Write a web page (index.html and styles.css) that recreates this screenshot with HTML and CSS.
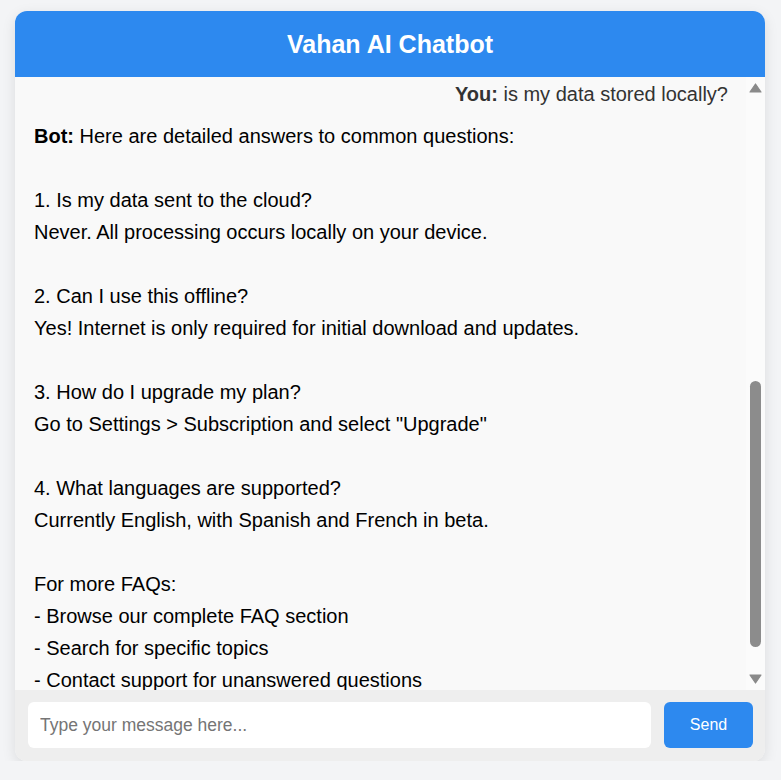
FILE: index.html
```html
<!DOCTYPE html>
<html lang="en">
<head>
<meta charset="utf-8">
<title>Vahan AI Chatbot</title>
<link rel="stylesheet" href="styles.css">
</head>
<body>
<div class="chat-container">
  <div class="chat-header">Vahan AI Chatbot</div>
  <div class="chat-body">
    <div class="chat-box">
      <div class="message user"><strong>You:</strong> is my data stored locally?</div>
      <div class="message bot"><strong>Bot:</strong> Here are detailed answers to common questions:

1. Is my data sent to the cloud?
Never. All processing occurs locally on your device.

2. Can I use this offline?
Yes! Internet is only required for initial download and updates.

3. How do I upgrade my plan?
Go to Settings &gt; Subscription and select "Upgrade"

4. What languages are supported?
Currently English, with Spanish and French in beta.

For more FAQs:
- Browse our complete FAQ section
- Search for specific topics
- Contact support for unanswered questions</div>
    </div>
    <div class="scrollbar" aria-hidden="true">
      <svg class="scroll-arrow up" width="13" height="10" viewBox="0 0 13 10"><polygon points="6.5,1 12,9 1,9" fill="#8a8a8a" stroke="#8a8a8a" stroke-width="1.2" stroke-linejoin="round"/></svg>
      <div class="scroll-thumb"></div>
      <svg class="scroll-arrow down" width="13" height="10" viewBox="0 0 13 10"><polygon points="1,1 12,1 6.5,9" fill="#8a8a8a" stroke="#8a8a8a" stroke-width="1.2" stroke-linejoin="round"/></svg>
    </div>
  </div>
  <div class="input-area">
    <input class="message-input" type="text" placeholder="Type your message here...">
    <button class="send-button">Send</button>
  </div>
</div>
</body>
</html>
```

FILE: styles.css
```css
* {
  box-sizing: border-box;
}

body {
  margin: 0;
  background: #f3f4f6;
  font-family: "Liberation Sans", Arial, sans-serif;
}

.chat-container {
  width: 750px;
  height: 750px;
  margin: 11px 0 0 15px;
  background: #f9f9f9;
  border-radius: 12px;
  overflow: hidden;
  box-shadow: 0 4px 14px rgba(0, 0, 0, 0.1);
  display: flex;
  flex-direction: column;
}

.chat-header {
  height: 66px;
  flex: none;
  background: #2d89ef;
  color: #fff;
  font-weight: bold;
  font-size: 25px;
  display: flex;
  align-items: center;
  justify-content: center;
}

.chat-body {
  flex: 1;
  min-height: 0;
  display: flex;
  background: #f9f9f9;
}

.chat-box {
  flex: 1;
  min-width: 0;
  overflow: hidden;
  padding: 1px 18px 20px 19px;
}

.message {
  font-size: 20px;
  line-height: 32px;
  margin-bottom: 10px;
  white-space: pre-line;
}

.message.user {
  text-align: right;
  color: #333;
}

.message.bot {
  text-align: left;
  color: #000;
}

.scrollbar {
  flex: none;
  width: 19px;
  background: #fbfbfb;
  display: flex;
  flex-direction: column;
  align-items: center;
}

.scroll-arrow {
  display: block;
  flex: none;
}

.scroll-arrow.up {
  margin-top: 6px;
}

.scroll-thumb {
  width: 11px;
  height: 266px;
  margin-top: 288px;
  border-radius: 6px;
  background: #8c8c8c;
}

.scroll-arrow.down {
  margin-top: auto;
  margin-bottom: 6px;
}

.input-area {
  flex: none;
  display: flex;
  gap: 13px;
  padding: 12px 12px 13px 13px;
  background: #eeeeee;
}

.message-input {
  flex: 1;
  height: 46px;
  border: none;
  border-radius: 6px;
  background: #fff;
  padding: 0 12px;
  font-family: "Liberation Sans", Arial, sans-serif;
  font-size: 17.5px;
  color: #333;
  outline: none;
}

.message-input::placeholder {
  color: #757575;
}

.send-button {
  width: 89px;
  height: 46px;
  border: none;
  border-radius: 6px;
  background: #2d89ef;
  color: #fff;
  font-family: "Liberation Sans", Arial, sans-serif;
  font-size: 16px;
  cursor: pointer;
}
```
